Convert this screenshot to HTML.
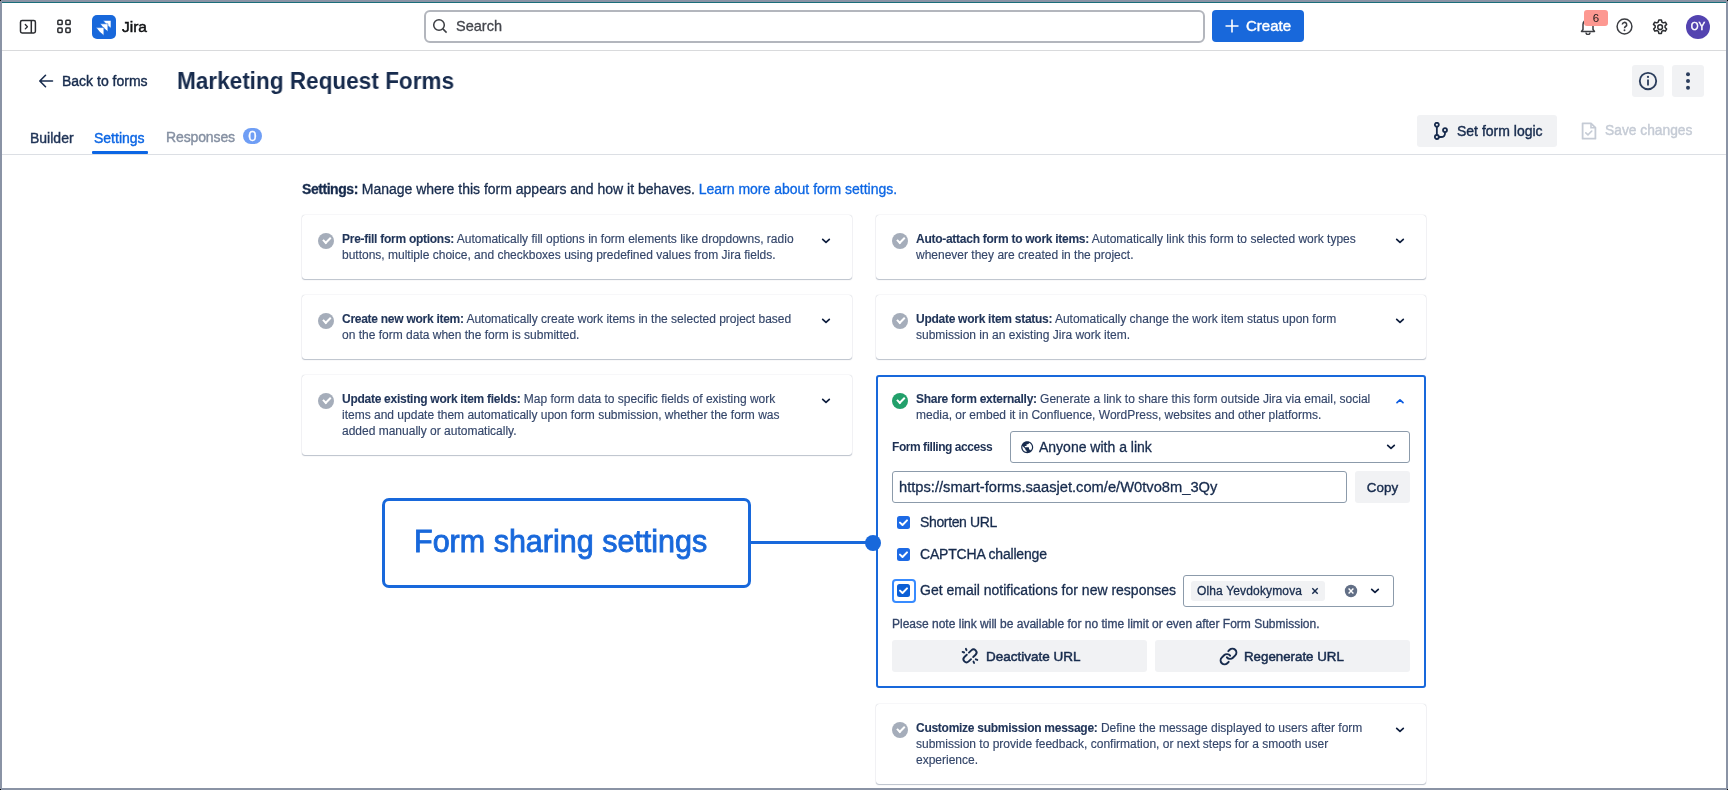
<!DOCTYPE html>
<html><head><meta charset="utf-8">
<style>
*{box-sizing:border-box;margin:0;padding:0}
html,body{width:1728px;height:790px;overflow:hidden;background:#fff}
body{position:relative;-webkit-font-smoothing:antialiased;font-family:"Liberation Sans",sans-serif;color:#172b4d}
.a{position:absolute}
.frame-t{left:0;top:0;width:1728px;height:2px;background:#8a93a5}
.frame-teal{left:2px;top:2px;width:1724px;height:1px;background:#1a6e7a}
.frame-l{left:0;top:0;width:2px;height:790px;background:#8a93a5}
.frame-r{left:1726px;top:0;width:2px;height:790px;background:#8a93a5}
.frame-b{left:0;top:788px;width:1728px;height:2px;background:#8a93a5}
.med{-webkit-text-stroke:0.4px currentColor}
.t{-webkit-text-stroke:0.3px currentColor}
.hline{height:1px;background:#dcdfe4}
.nw{white-space:nowrap;will-change:transform}
.card{border-radius:3px;box-shadow:0 1px 1px rgba(9,30,66,0.25),0 0 1px rgba(9,30,66,0.31);background:#fff}
.ctext{white-space:nowrap;will-change:transform;font-size:12px;line-height:16px;color:#34466a;letter-spacing:0px;-webkit-text-stroke:0.15px currentColor}
.ctext b{color:#22365a;letter-spacing:-0.27px;-webkit-text-stroke:0.1px currentColor}
.ck{width:16px;height:16px;border-radius:50%;background:#a5adba}
.ck::after{content:"";position:absolute;left:4.6px;top:4.2px;width:6px;height:3.4px;border-left:2px solid #fff;border-bottom:2px solid #fff;transform:rotate(-45deg)}
.ck.green{background:#22a06b}
.chev path{fill:none;stroke:#0d1d3d;stroke-width:1.7;stroke-linecap:round;stroke-linejoin:round}
.cb{width:13px;height:13px;border-radius:2px;background:#1868db}
.cb::after{content:"";position:absolute;left:3px;top:3.2px;width:6px;height:3.2px;border-left:1.7px solid #fff;border-bottom:1.7px solid #fff;transform:rotate(-45deg)}

</style></head>
<body>
<!-- ===== TOP NAV ===== -->
<div class="a hline" style="left:2px;top:50px;width:1724px;background:#d9dadc"></div>
<!-- sidebar toggle icon -->
<svg class="a" style="left:19px;top:18.5px" width="18" height="16" viewBox="0 0 18 16">
 <rect x="1.5" y="1.55" width="14.9" height="12.4" rx="1.6" fill="none" stroke="#2a2c30" stroke-width="1.5"/>
 <line x1="12.3" y1="1.6" x2="12.3" y2="14" stroke="#2a2c30" stroke-width="1.5"/>
 <path d="M6.3 5.5 L8.4 7.7 L6.3 9.9" fill="none" stroke="#2a2c30" stroke-width="1.3" stroke-linecap="round" stroke-linejoin="round"/>
</svg>
<!-- app grid icon -->
<svg class="a" style="left:56px;top:19px" width="16" height="16" viewBox="0 0 16 16">
 <g fill="none" stroke="#2a2c30" stroke-width="1.5">
 <rect x="1.85" y="1.25" width="4.3" height="4.3" rx="0.9"/><rect x="9.85" y="1.25" width="4.3" height="4.3" rx="0.9"/>
 <rect x="1.85" y="9.1" width="4.3" height="4.3" rx="0.9"/><rect x="9.85" y="9.1" width="4.3" height="4.3" rx="0.9"/>
 </g>
</svg>
<!-- jira logo -->
<div class="a" style="left:92px;top:14.5px;width:24px;height:24px;border-radius:5px;background:#1868db"></div>
<svg class="a" style="left:92px;top:14.5px" width="24" height="24" viewBox="0 0 24 24">
 <g fill="#fff" stroke="#1868db" stroke-width="0.6" stroke-linejoin="round">
 <path d="M11.1 5.4 H19 V13.2 Q14.5 10.6 11.1 5.4 Z"/>
 <path d="M8.1 8.8 H15.9 V16.6 Q11.4 14 8.1 8.8 Z"/>
 <path d="M4.1 12.6 H11.9 V20.4 Q7.4 17.8 4.1 12.6 Z"/>
 </g>
</svg>
<div class="a nw" style="left:122px;top:16.5px;font-size:15.5px;line-height:20px;color:#101214;-webkit-text-stroke:0.5px #101214">Jira</div>

<!-- search -->
<div class="a" style="left:424px;top:10px;width:781px;height:33px;border:2px solid #b3b6bd;border-radius:6px"></div>
<svg class="a" style="left:432px;top:18px" width="16" height="16" viewBox="0 0 16 16">
 <circle cx="7" cy="7" r="5.3" fill="none" stroke="#3b3d42" stroke-width="1.5"/>
 <line x1="10.9" y1="10.9" x2="14.6" y2="14.6" stroke="#3b3d42" stroke-width="1.5"/>
</svg>
<div class="a nw t" style="left:456px;top:17px;font-size:14.5px;line-height:18px;color:#44464d">Search</div>

<!-- create -->
<div class="a" style="left:1212px;top:10.3px;width:92px;height:32px;border-radius:4px;background:#1868db"></div>
<svg class="a" style="left:1224px;top:18px" width="16" height="16" viewBox="0 0 16 16">
 <path d="M8 1.5 V14.5 M1.5 8 H14.5" stroke="#fff" stroke-width="1.6"/>
</svg>
<div class="a nw med" style="left:1246px;top:17px;font-size:15px;line-height:18px;color:#fff">Create</div>

<!-- right icons -->
<svg class="a" style="left:1580px;top:17px" width="16" height="18" viewBox="0 0 16 18">
 <path d="M3 12.5 V7.5 a5 5 0 0 1 10 0 V12.5 L14.5 14.5 H1.5 Z" fill="none" stroke="#3b3d42" stroke-width="1.5" stroke-linejoin="round"/>
 <path d="M6 15.5 a2 2 0 0 0 4 0" fill="none" stroke="#3b3d42" stroke-width="1.5"/>
</svg>
<div class="a" style="left:1584px;top:9.6px;width:24px;height:16px;border-radius:3px;background:#fd9891"></div>
<div class="a nw" style="left:1584px;top:9.6px;width:24px;height:16px;font-size:11.5px;line-height:16px;text-align:center;color:#1a1a1a">6</div>
<svg class="a" style="left:1616px;top:18px" width="17" height="17" viewBox="0 0 17 17">
 <circle cx="8.5" cy="8.5" r="7.4" fill="none" stroke="#3b3d42" stroke-width="1.5"/>
 <path d="M6.3 6.6 a2.2 2.2 0 1 1 3.3 1.9 c-0.8 0.5 -1.1 0.9 -1.1 1.7" fill="none" stroke="#3b3d42" stroke-width="1.5"/>
 <circle cx="8.5" cy="12.3" r="0.95" fill="#3b3d42"/>
</svg>
<svg class="a" style="left:1650.9px;top:18.2px" width="18.25" height="18.25" viewBox="0 0 24 24">
 <path fill="none" stroke="#2a2c30" stroke-width="1.95" stroke-linejoin="round" d="M10.3 2.5h3.4l.6 2.8 1.9 1.1 2.7-.9 1.7 2.9-2.1 1.9v2.2l2.1 1.9-1.7 2.9-2.7-.9-1.9 1.1-.6 2.8h-3.4l-.6-2.8-1.9-1.1-2.7.9-1.7-2.9 2.1-1.9v-2.2L3.2 8.4l1.7-2.9 2.7.9 1.9-1.1z"/>
 <circle cx="12" cy="12" r="3.1" fill="none" stroke="#2a2c30" stroke-width="1.95"/>
</svg>
<div class="a" style="left:1686px;top:14.5px;width:24px;height:24px;border-radius:50%;background:#5343b0"></div>
<div class="a nw" style="left:1686px;top:14.5px;width:24px;height:24px;font-size:10px;line-height:24px;text-align:center;color:#fff;-webkit-text-stroke:0.45px #fff">OY</div>

<!-- ===== PAGE HEADER ===== -->
<svg class="a" style="left:38px;top:73px" width="16" height="16" viewBox="0 0 16 16">
 <path d="M14.5 8 H2 M7.5 2.3 L1.8 8 L7.5 13.7" fill="none" stroke="#172b4d" stroke-width="1.6" stroke-linecap="round" stroke-linejoin="round"/>
</svg>
<div class="a nw med" style="left:62px;top:72.6px;font-size:14px;line-height:17px;color:#172b4d">Back to forms</div>
<div class="a nw" style="left:177px;top:66.7px;font-size:24px;line-height:27px;transform:scaleX(0.94);transform-origin:0 0;font-weight:bold;color:#172b4d">Marketing Request Forms</div>

<!-- info / more -->
<div class="a" style="left:1632px;top:65px;width:32px;height:32px;border-radius:3px;background:#f1f2f4"></div>
<svg class="a" style="left:1638px;top:71px" width="20" height="20" viewBox="0 0 20 20">
 <circle cx="10" cy="10" r="8.2" fill="none" stroke="#2c3e5d" stroke-width="1.85"/>
 <line x1="10" y1="8.4" x2="10" y2="14.6" stroke="#2c3e5d" stroke-width="1.8"/>
 <circle cx="10" cy="5.9" r="1.1" fill="#2c3e5d"/>
</svg>
<div class="a" style="left:1672px;top:65px;width:32px;height:32px;border-radius:3px;background:#f1f2f4"></div>
<svg class="a" style="left:1678px;top:71px" width="20" height="20" viewBox="0 0 20 20">
 <circle cx="10" cy="3.3" r="2" fill="#2c3e5d"/><circle cx="10" cy="10" r="2" fill="#2c3e5d"/><circle cx="10" cy="16.7" r="2" fill="#2c3e5d"/>
</svg>

<!-- tabs -->
<div class="a hline" style="left:2px;top:154px;width:1724px;background:#dcdfe4"></div>
<div class="a nw med" style="left:30px;top:130px;font-size:14px;line-height:17px;color:#1f3356">Builder</div>
<div class="a nw med" style="left:94px;top:130px;font-size:14px;line-height:17px;color:#0c66e4">Settings</div>
<div class="a" style="left:92px;top:151px;width:56px;height:3px;background:#0c66e4;border-radius:1px"></div>
<div class="a nw med" style="left:166px;top:129.4px;font-size:14px;line-height:17px;letter-spacing:-0.12px;color:#8590a2">Responses</div>
<div class="a" style="left:243px;top:128px;width:19px;height:16px;border-radius:8px;background:#6f9ef5"></div>
<div class="a nw" style="left:243.3px;top:127.8px;width:19px;height:16px;font-size:15px;line-height:16px;text-align:center;color:#fff;-webkit-text-stroke:0.3px #fff">0</div>

<!-- set form logic / save -->
<div class="a" style="left:1417px;top:115px;width:140px;height:32px;border-radius:3px;background:#f1f2f4"></div>
<svg class="a" style="left:1432px;top:122px" width="18" height="18" viewBox="0 0 18 18">
 <g fill="none" stroke="#172b4d" stroke-width="1.8">
 <circle cx="4.85" cy="2.75" r="2"/><circle cx="4.85" cy="15" r="2"/><circle cx="13" cy="8.05" r="2"/>
 <path d="M4.85 4.75 V13"/><path d="M6.85 15 H9 Q13 15 13 11.2 V10.05"/>
 </g>
</svg>
<div class="a nw med" style="left:1457px;top:122.7px;font-size:14px;line-height:17px;color:#172b4d">Set form logic</div>
<svg class="a" style="left:1581px;top:122px" width="16" height="18" viewBox="0 0 16 18">
 <path d="M1.6 1.3 H10 L14.4 5.7 V16.7 H1.6 Z" fill="none" stroke="#c5cbd5" stroke-width="1.8" stroke-linejoin="round"/>
 <path d="M10 1.3 V5.7 H14.4" fill="none" stroke="#c5cbd5" stroke-width="1.6"/>
 <path d="M4.8 10.8 L7 12.9 L10.8 9" fill="none" stroke="#c5cbd5" stroke-width="1.6" stroke-linecap="round"/>
</svg>
<div class="a nw med" style="left:1605px;top:122px;font-size:13.8px;line-height:17px;color:#c5cbd5">Save changes</div>

<!-- CONTENT -->

<div class="a nw t" style="left:302px;top:181px;font-size:14px;line-height:17px;color:#172b4d"><b style="letter-spacing:-0.45px">Settings:</b> Manage where this form appears and how it behaves. <span style="color:#0c66e4">Learn more about form settings.</span></div>

<div class="a card" style="left:302px;top:215px;width:550px;height:64px"></div>
<div class="a ck" style="left:318px;top:233px"></div>
<div class="a ctext" style="left:342px;top:231px"><b>Pre-fill form options:</b> Automatically fill options in form elements like dropdowns, radio<br>buttons, multiple choice, and checkboxes using predefined values from Jira fields.</div>
<svg class="a chev" style="left:820px;top:237px" width="12" height="8" viewBox="0 0 12 8"><path d="M2.7 2.4 L6 5.4 L9.3 2.4" /></svg>

<div class="a card" style="left:876px;top:215px;width:550px;height:64px"></div>
<div class="a ck" style="left:892px;top:233px"></div>
<div class="a ctext" style="left:916px;top:231px"><b>Auto-attach form to work items:</b> Automatically link this form to selected work types<br>whenever they are created in the project.</div>
<svg class="a chev" style="left:1394px;top:237px" width="12" height="8" viewBox="0 0 12 8"><path d="M2.7 2.4 L6 5.4 L9.3 2.4" /></svg>

<div class="a card" style="left:302px;top:295px;width:550px;height:64px"></div>
<div class="a ck" style="left:318px;top:313px"></div>
<div class="a ctext" style="left:342px;top:311px"><b>Create new work item:</b> Automatically create work items in the selected project based<br>on the form data when the form is submitted.</div>
<svg class="a chev" style="left:820px;top:317px" width="12" height="8" viewBox="0 0 12 8"><path d="M2.7 2.4 L6 5.4 L9.3 2.4" /></svg>

<div class="a card" style="left:876px;top:295px;width:550px;height:64px"></div>
<div class="a ck" style="left:892px;top:313px"></div>
<div class="a ctext" style="left:916px;top:311px"><b>Update work item status:</b> Automatically change the work item status upon form<br>submission in an existing Jira work item.</div>
<svg class="a chev" style="left:1394px;top:317px" width="12" height="8" viewBox="0 0 12 8"><path d="M2.7 2.4 L6 5.4 L9.3 2.4" /></svg>

<div class="a card" style="left:302px;top:375px;width:550px;height:80px"></div>
<div class="a ck" style="left:318px;top:393px"></div>
<div class="a ctext" style="left:342px;top:391px"><b>Update existing work item fields:</b> Map form data to specific fields of existing work<br>items and update them automatically upon form submission, whether the form was<br>added manually or automatically.</div>
<svg class="a chev" style="left:820px;top:397px" width="12" height="8" viewBox="0 0 12 8"><path d="M2.7 2.4 L6 5.4 L9.3 2.4" /></svg>

<div class="a card" style="left:876px;top:704px;width:550px;height:80px"></div>
<div class="a ck" style="left:892px;top:722px"></div>
<div class="a ctext" style="left:916px;top:720px"><b>Customize submission message:</b> Define the message displayed to users after form<br>submission to provide feedback, confirmation, or next steps for a smooth user<br>experience.</div>
<svg class="a chev" style="left:1394px;top:726px" width="12" height="8" viewBox="0 0 12 8"><path d="M2.7 2.4 L6 5.4 L9.3 2.4" /></svg>

<!-- SHARE CARD -->
<div class="a" style="left:876px;top:375px;width:550px;height:313px;border:2px solid #1868db;border-radius:3px"></div>
<div class="a ck green" style="left:892px;top:393px"></div>
<div class="a ctext" style="left:916px;top:391px"><b>Share form externally:</b> Generate a link to share this form outside Jira via email, social<br>media, or embed it in Confluence, WordPress, websites and other platforms.</div>
<svg class="a chev" style="left:1394px;top:396.5px" width="12" height="8" viewBox="0 0 12 8"><path style="stroke:#0c5ce0" d="M3 5.6 L6 2.8 L9 5.6" /></svg>

<div class="a nw" style="left:892px;top:439px;font-size:12px;line-height:16px;color:#1d3053;font-weight:bold;letter-spacing:-0.45px">Form filling access</div>
<div class="a" style="left:1010px;top:431px;width:400px;height:32px;border:1px solid #8c9bab;border-radius:3px"></div>
<svg class="a" style="left:1019.8px;top:439.8px" width="14.4" height="14.4" viewBox="0 0 24 24"><path fill="#172b4d" d="M12 2C6.48 2 2 6.48 2 12s4.48 10 10 10 10-4.48 10-10S17.52 2 12 2zm-1 17.93c-3.95-.49-7-3.85-7-7.93 0-.62.08-1.21.21-1.790L9 15v1c0 1.1.9 2 2 2v1.93zm6.9-2.54c-.26-.81-1-1.39-1.9-1.39h-1v-3c0-.55-.45-1-1-1H8v-2h2c.55 0 1-.45 1-1V7h2c1.1 0 2-.9 2-2v-.41c2.93 1.19 5 4.06 5 7.41 0 2.080-.8 3.970-2.1 5.390z"/></svg>
<div class="a nw t" style="left:1039px;top:438.5px;font-size:14px;line-height:17px;color:#172b4d">Anyone with a link</div>
<svg class="a chev" style="left:1385px;top:443px" width="12" height="8" viewBox="0 0 12 8"><path d="M2.7 2.4 L6 5.4 L9.3 2.4" /></svg>

<div class="a" style="left:892px;top:471px;width:455px;height:32px;border:1px solid #8c9bab;border-radius:3px"></div>
<div class="a nw t" style="left:899px;top:478.5px;font-size:14.7px;line-height:17px;color:#172b4d">https://smart-forms.saasjet.com/e/W0tvo8m_3Qy</div>
<div class="a" style="left:1355px;top:471px;width:55px;height:32px;border-radius:3px;background:#f1f2f4"></div>
<div class="a nw med" style="left:1355px;top:479.3px;width:55px;text-align:center;font-size:13.4px;line-height:17px;color:#172b4d">Copy</div>

<svg class="a" style="left:897px;top:516px" width="13" height="13" viewBox="0 0 13 13"><rect x="0" y="0" width="13" height="13" rx="2.5" fill="#1d6ae5"/><path d="M3 6.6 L5.5 9 L10 4.4" fill="none" stroke="#fff" stroke-width="2" stroke-linecap="round" stroke-linejoin="round"/></svg>
<div class="a nw t" style="left:920px;top:514.2px;font-size:14px;letter-spacing:-0.36px;line-height:17px;color:#172b4d">Shorten URL</div>
<svg class="a" style="left:897px;top:548px" width="13" height="13" viewBox="0 0 13 13"><rect x="0" y="0" width="13" height="13" rx="2.5" fill="#1d6ae5"/><path d="M3 6.6 L5.5 9 L10 4.4" fill="none" stroke="#fff" stroke-width="2" stroke-linecap="round" stroke-linejoin="round"/></svg>
<div class="a nw t" style="left:920px;top:546.2px;font-size:14px;letter-spacing:-0.19px;line-height:17px;color:#172b4d">CAPTCHA challenge</div>
<div class="a" style="left:892px;top:579px;width:24px;height:24px;border:2px solid #388bff;border-radius:4px"></div>
<svg class="a" style="left:897px;top:584px" width="13" height="13" viewBox="0 0 13 13"><rect x="0" y="0" width="13" height="13" rx="2.5" fill="#0c5fd6"/><path d="M3 6.6 L5.5 9 L10 4.4" fill="none" stroke="#fff" stroke-width="2" stroke-linecap="round" stroke-linejoin="round"/></svg>
<div class="a nw t" style="left:920px;top:582px;font-size:14px;line-height:17px;color:#172b4d">Get email notifications for new responses</div>

<div class="a" style="left:1183px;top:575px;width:211px;height:32px;border:1px solid #8c9bab;border-radius:3px"></div>
<div class="a" style="left:1191px;top:581px;width:134px;height:20px;border-radius:3px;background:#f1f2f4"></div>
<div class="a nw t" style="left:1197px;top:583px;letter-spacing:0.15px;font-size:12px;line-height:16px;color:#172b4d">Olha Yevdokymova</div>
<svg class="a" style="left:1310px;top:586px" width="10" height="10" viewBox="0 0 10 10"><path d="M2.3 2.3 L7.7 7.7 M7.7 2.3 L2.3 7.7" stroke="#172b4d" stroke-width="1.4"/></svg>
<svg class="a" style="left:1344px;top:584px" width="14" height="14" viewBox="0 0 14 14"><circle cx="7" cy="7" r="6.2" fill="#626f86"/><path d="M4.6 4.6 L9.4 9.4 M9.4 4.6 L4.6 9.4" stroke="#fff" stroke-width="1.4"/></svg>
<svg class="a chev" style="left:1369px;top:587px" width="12" height="8" viewBox="0 0 12 8"><path d="M2.7 2.4 L6 5.4 L9.3 2.4" /></svg>

<div class="a nw t" style="left:892px;top:615.5px;font-size:12px;line-height:16px;color:#34466a">Please note link will be available for no time limit or even after Form Submission.</div>

<div class="a" style="left:892px;top:640px;width:255px;height:32px;border-radius:3px;background:#f1f2f4"></div>
<svg class="a" style="left:955px;top:642px" width="30" height="28" viewBox="0 0 30 28">
 <g fill="none" stroke="#172b4d" stroke-width="1.9" stroke-linecap="round">
 <g transform="translate(15 13.9) rotate(-44)">
 <path d="M-1.5 -3.05 H-4.8 A3.05 3.05 0 0 0 -4.8 3.05 H-1.5"/>
 <path d="M1.5 -3.05 H4.8 A3.05 3.05 0 0 1 4.8 3.05 H1.5"/>
 </g>
 <path d="M10.9 6.8 L11.5 8.2 M7.6 9.9 L9.1 10.5 M22.3 17.9 L20.8 17.3 M19.1 21 L18.5 19.6"/>
 </g>
</svg>
<div class="a nw med" style="left:986px;top:648px;font-size:13.5px;line-height:17px;color:#172b4d;-webkit-text-stroke:0.5px #172b4d">Deactivate URL</div>
<div class="a" style="left:1155px;top:640px;width:255px;height:32px;border-radius:3px;background:#f1f2f4"></div>
<svg class="a" style="left:1219px;top:646.8px" width="19" height="19" viewBox="0 0 24 24">
 <g fill="none" stroke="#172b4d" stroke-width="2.5" stroke-linecap="round" stroke-linejoin="round">
 <path d="M10 13a5 5 0 0 0 7.54.54l3-3a5 5 0 0 0-7.07-7.07l-1.72 1.71"/>
 <path d="M14 11a5 5 0 0 0-7.54-.54l-3 3a5 5 0 0 0 7.07 7.07l1.71-1.71"/>
 </g>
</svg>
<div class="a nw med" style="left:1244px;top:648px;font-size:13.3px;line-height:17px;color:#172b4d;-webkit-text-stroke:0.5px #172b4d">Regenerate URL</div>

<!-- ANNOTATION -->
<div class="a" style="left:382px;top:498px;width:369px;height:90px;border:3px solid #1868db;border-radius:7px;background:#fff"></div>
<div class="a nw" style="left:414px;top:523.3px;font-size:30.5px;line-height:36px;color:#1868db;-webkit-text-stroke:0.85px #1868db">Form sharing settings</div>
<div class="a" style="left:751px;top:541px;width:118px;height:3px;background:#1868db"></div>
<div class="a" style="left:865px;top:535px;width:16px;height:16px;border-radius:50%;background:#1868db"></div>

<!-- CONTENT-END -->
<div class="a frame-t"></div><div class="a frame-teal"></div><div class="a frame-l"></div><div class="a frame-r"></div><div class="a frame-b"></div>
<div class="a" style="left:0;top:0;width:1px;height:1px;background:#000"></div><div class="a" style="left:1727px;top:0;width:1px;height:1px;background:#000"></div><div class="a" style="left:0;top:789px;width:1px;height:1px;background:#000"></div><div class="a" style="left:1727px;top:789px;width:1px;height:1px;background:#000"></div>
</body></html>
